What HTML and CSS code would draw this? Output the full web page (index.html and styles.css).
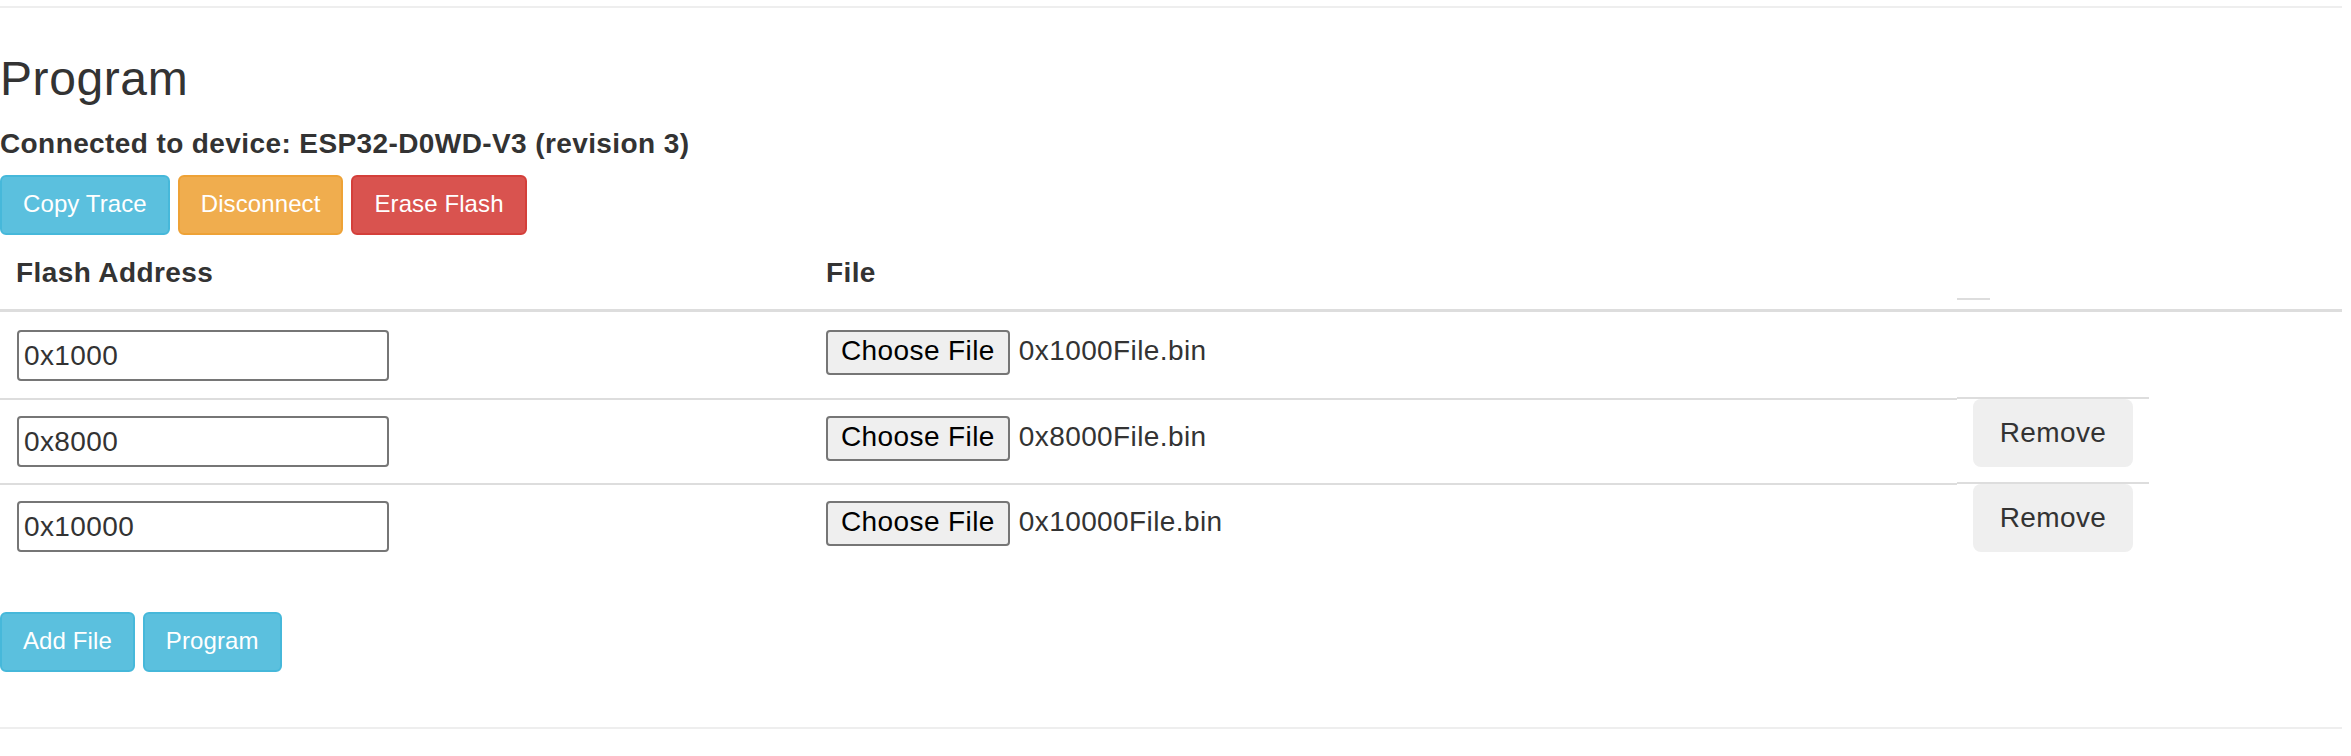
FILE: index.html
```html
<!DOCTYPE html>
<html>
<head>
<meta charset="utf-8">
<title>Program</title>
<link rel="stylesheet" href="styles.css">
</head>
<body>
<div class="page">
  <hr class="rule">
  <h3 class="title">Program</h3>
  <p class="status">Connected to device: ESP32-D0WD-V3 (revision 3)</p>
  <div class="btn-row">
    <button class="btn btn-info">Copy Trace</button>
    <button class="btn btn-warning">Disconnect</button>
    <button class="btn btn-danger">Erase Flash</button>
  </div>
  <div class="table">
    <div class="thead">
      <div class="th">Flash Address</div>
      <div class="th">File</div>
      <div class="th th-act"><div class="stub"></div></div>
    </div>
    <div class="row row-first">
      <div class="td"><input class="addr" type="text" value="0x1000"></div>
      <div class="td"><div class="file"><button class="choose">Choose File</button><span class="fname">0x1000File.bin</span></div></div>
      <div class="td td-act td-empty"></div>
    </div>
    <div class="row">
      <div class="td"><input class="addr" type="text" value="0x8000"></div>
      <div class="td"><div class="file"><button class="choose">Choose File</button><span class="fname">0x8000File.bin</span></div></div>
      <div class="td td-act"><button class="remove">Remove</button></div>
    </div>
    <div class="row">
      <div class="td"><input class="addr" type="text" value="0x10000"></div>
      <div class="td"><div class="file"><button class="choose">Choose File</button><span class="fname">0x10000File.bin</span></div></div>
      <div class="td td-act"><button class="remove">Remove</button></div>
    </div>
  </div>
  <div class="btn-row btn-row-bottom">
    <button class="btn btn-info">Add File</button>
    <button class="btn btn-info">Program</button>
  </div>
  <hr class="rule rule-bottom">
</div>
</body>
</html>
```
FILE: styles.css
```css
* { box-sizing: border-box; }
html, body { margin: 0; padding: 0; background: #fff; }
body {
  font-family: "Liberation Sans", Arial, Helvetica, sans-serif;
  font-size: 28px;
  line-height: 40px;
  color: #333;
  letter-spacing: 0.4px;
}
.page {
  width: 2342px;
  padding-top: 6px;
}
.rule {
  margin: 0;
  border: 0;
  border-top: 2px solid #eee;
  height: 0;
}
.title {
  margin: 44px 0 0;
  font-size: 48px;
  line-height: 53px;
  font-weight: 500;
  letter-spacing: 0.6px;
  color: #333;
}
.status {
  margin: 19px 0 0;
  font-weight: bold;
  font-size: 28px;
  line-height: 40px;
}
.btn-row {
  margin-top: 11px;
  display: flex;
  gap: 8px;
}
.btn {
  height: 60px;
  padding: 0 21px 2px;
  border: 2px solid transparent;
  border-radius: 6px;
  font-family: inherit;
  font-size: 24px;
  line-height: 36px;
  letter-spacing: 0.1px;
  color: #fff;
  cursor: pointer;
}
.btn-info { background: #5bc0de; border-color: #46b8da; }
.btn-warning { background: #f0ad4e; border-color: #eea236; }
.btn-danger { background: #d9534f; border-color: #d43f3a; }

.table { margin-top: 2px; }
.thead {
  display: grid;
  grid-template-columns: 810px 1147px 1fr;
  border-bottom: 3px solid #ddd;
}
.th {
  padding: 16px;
  font-weight: bold;
  line-height: 40px;
}
.th-act { padding: 0; }
.stub {
  width: 33px;
  height: 2px;
  margin-top: 61px;
  background: #ddd;
}
.row {
  display: grid;
  grid-template-columns: 810px 1147px 192px;
  align-items: start;
}
.td {
  padding: 16px;
  border-top: 2px solid #ddd;
}
.row-first .td {
  border-top: 0;
  padding-top: 18px;
  padding-bottom: 17px;
}
.td-act {
  margin-top: -1px;
  padding: 0 16px 16px;
}
.row-first .td-empty { padding: 0; }
.addr {
  display: block;
  width: 372px;
  height: 51px;
  margin: 0 0 0 1px;
  padding: 0 5px;
  border: 2px solid #767676;
  border-radius: 4px;
  font-family: inherit;
  font-size: 28px;
  letter-spacing: 0.4px;
  color: #333;
  background: #fff;
}
.file {
  display: flex;
  align-items: baseline;
}
.choose {
  height: 45px;
  padding: 0 13px 4px;
  border: 2px solid #767676;
  border-radius: 4px;
  background: #efefef;
  font-family: inherit;
  font-size: 28px;
  line-height: 37px;
  letter-spacing: 0.4px;
  color: #000;
}
.fname {
  margin-left: 9px;
  line-height: 40px;
}
.remove {
  display: block;
  width: 160px;
  height: 68px;
  border: 0;
  border-radius: 8px;
  background: #efefef;
  font-family: inherit;
  font-size: 28px;
  letter-spacing: 0.4px;
  color: #333;
}
.btn-row-bottom { margin-top: 44px; }
.rule-bottom { margin-top: 55px; }
```
